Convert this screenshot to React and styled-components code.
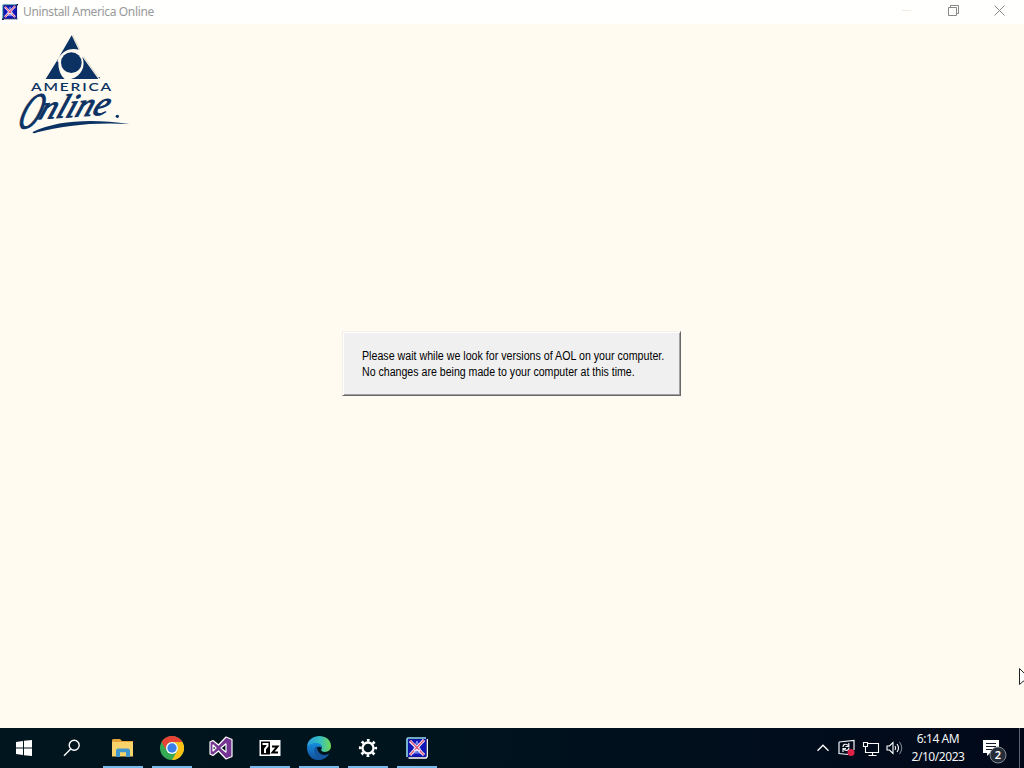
import React from 'react'
import styled, { createGlobalStyle } from 'styled-components'

const GlobalStyle = createGlobalStyle`
  body {
    margin: 0;
    overflow: hidden;
    background: #fffbf0;
  }
  svg {
    display: block;
  }
`

const Desktop = styled.div`
  position: relative;
  display: flex;
  flex-direction: column;
  width: 1024px;
  height: 768px;
  overflow: hidden;
  font-family: "Noto Sans", "Open Sans", sans-serif;
`

const TitleBar = styled.header`
  display: flex;
  align-items: center;
  height: 24px;
  padding: 0 2px 0 2px;
  box-sizing: border-box;
  background: #fffffe;
`

const Title = styled.span`
  flex: 1;
  margin-left: 5px;
  font-size: 12px;
  line-height: 24px;
  letter-spacing: -0.35px;
  color: #999;
`

const WindowButton = styled.span`
  display: flex;
  align-items: center;
  justify-content: center;
  width: 46px;
  height: 20px;
  margin-bottom: 4px;
`

const Content = styled.main`
  display: grid;
  grid-template-rows: 307px auto 1fr;
  height: 704px;
  background: #fffbf0;
`

const LogoArea = styled.div`
  padding: 4px 0 0 10px;
`

const Dialog = styled.div`
  width: 339px;
  height: 65px;
  box-sizing: border-box;
  margin-left: 342px;
  padding: 16px 0 0 19px;
  border: 1px solid;
  border-color: #f1efe6 #696969 #696969 #f1efe6;
  box-shadow: inset 1px 1px #fff, inset -1px -1px #a0a0a0;
  background: #f0f0f0;
`

const Line = styled.p`
  margin: 0;
  font-family: "Liberation Sans", Arial, sans-serif;
  font-size: 12px;
  line-height: 16px;
  white-space: nowrap;
  color: #000;
  transform: scaleX(${props => props.$narrow});
  transform-origin: left;
`

const Taskbar = styled.footer`
  display: flex;
  height: 40px;
  background: linear-gradient(90deg, #00151d 0%, #00141e 45%, #010d1c 75%, #010919 100%);
`

const Task = styled.div`
  display: flex;
  align-items: center;
  justify-content: center;
  box-sizing: border-box;
  width: 40px;
  height: 40px;
  margin-right: 9px;
  padding-top: ${props => props.$open ? 2 : 0}px;
  padding-right: ${props => props.$nudge || 0}px;
  border-bottom: ${props => props.$open ? '2px solid #76b9ed' : 'none'};
`

const Tasks = styled.div`
  display: flex;
  flex: 1;
  padding-left: 5px;
`

const Tray = styled.div`
  display: flex;
  align-items: center;
  gap: 6px;
  svg:first-child {
    margin-right: 3px;
  }
`

const Clock = styled.div`
  width: 68px;
  padding-top: 2px;
  font-size: 12px;
  line-height: 18px;
  letter-spacing: -0.45px;
  text-align: center;
  white-space: nowrap;
  color: #f3f5f7;
`

const Notifications = styled.div`
  width: 46px;
  margin-left: 1px;
  border-right: 1px solid #5b6470;
`

const Pointer = styled.div`
  position: absolute;
  left: 1019px;
  top: 668px;
`

const UninstallIcon = ({ size }) => (
  <svg width={size} height={size} viewBox="0 0 22 22">
    <path d="M2 0H22V20L20 22H0V2Z" fill="#0a1238" />
    <path d="M1 20V2L2 1H20" fill="none" stroke="#8edcf0" strokeWidth="1.600" />
    <path d="M2.500 21H20L21.300 19.500V2" fill="none" stroke="#fff" strokeWidth="1.300" />
    <rect x="2.200" y="2.200" width="18" height="17.600" fill="#1015b8" />
    <path d="M11 4L16 16H6Z" fill="#4b56dd" stroke="#8f9aee" />
    <path d="M4 4L18 18M18 3L4 18" stroke="#fff" strokeWidth="3" />
    <path d="M4 3.500L18 18M18 3L4 18" stroke="#e0557c" strokeWidth="1.400" />
    <path d="M8 13.500H14" stroke="#dfe6ff" strokeWidth="1.500" />
  </svg>
)

const AolLogo = () => (
  <svg width="130" height="112" viewBox="0 0 390 336">
    <path d="M188 22L209 64M221 86L267 150" stroke="#dedac8" strokeWidth="3" />
    <g fill="#0b3263">
      <path d="M185 22L206 65C181 59 161 67 145 91Z" />
      <path d="M146 90C143 115 147 137 164 153H107Z" />
      <path d="M217 86L265 153H183C214 144 228 116 217 86Z" />
      <circle cx="184" cy="104" r="31" />
      <circle cx="268" cy="149" r="2" />
    </g>
    <path d="M144 101C154 74 181 61 215 71" fill="none" stroke="#fffbf0" strokeWidth="5" />
    <text x="63" y="188" textLength="246" lengthAdjust="spacingAndGlyphs" fontFamily="Lato, sans-serif" fontSize="34" fontWeight="600" letterSpacing="4" fill="#0b3263">AMERICA</text>
    <g fontFamily="Liberation Serif, serif" fontStyle="italic" fill="#0b3263" stroke="#0b3263" strokeWidth="3">
      <text transform="translate(16 303) rotate(-4) skewX(-24)" fontSize="150" textLength="66" lengthAdjust="spacingAndGlyphs">O</text>
      <text transform="translate(82 274) rotate(-4) skewX(-24)" fontSize="98" textLength="208" lengthAdjust="spacingAndGlyphs">nline</text>
    </g>
    <circle cx="322" cy="265" r="5" fill="#0b3263" />
    <path d="M68 312C142 277 243 272 358 288C250 282 156 293 82 313C73 317 67 316 68 312Z" fill="#0b3263" />
  </svg>
)

const App = () => (
  <Desktop>
    <GlobalStyle />
    <TitleBar>
      <UninstallIcon size={16} />
      <Title>Uninstall America Online</Title>
      <WindowButton>
        <svg width="10" height="10"><path d="M0 5.500H9" stroke="#f3ece4" /></svg>
      </WindowButton>
      <WindowButton>
        <svg width="11" height="11" fill="none" stroke="#888">
          <path d="M0.500 2.500H8.500V10.500H0.500ZM2.500 2.500V0.500H10.500V8.500H8.500" />
        </svg>
      </WindowButton>
      <WindowButton>
        <svg width="11" height="11"><path d="M0.500 0.500L10.500 10.500M10.500 0.500L0.500 10.500" stroke="#888" /></svg>
      </WindowButton>
    </TitleBar>

    <Content>
      <LogoArea><AolLogo /></LogoArea>
      <Dialog>
        <Line $narrow={0.888}>Please wait while we look for versions of AOL on your computer.</Line>
        <Line $narrow={0.883}>No changes are being made to your computer at this time.</Line>
      </Dialog>
    </Content>

    <Taskbar>
      <Tasks>
        <Task $nudge={2}>
          <svg width="18" height="18" viewBox="0 0 18 18" fill="#fff">
            <path d="M1 3L8 2V8.500H1ZM9 1.800L17 1V8.500H9ZM1 9.500H8V16L1 15ZM9 9.500H17V17L9 16.200Z" />
          </svg>
        </Task>
        <Task $nudge={4}>
          <svg width="18" height="18" viewBox="0 0 18 18" fill="none" stroke="#fff" strokeWidth="1.400">
            <circle cx="11.200" cy="6.300" r="5" />
            <path d="M7.700 10L1 16.700" />
          </svg>
        </Task>
        <Task $open>
          <svg width="22" height="20" viewBox="0 0 22 20">
            <path d="M0 2L1 1H8L10 3H21V18H0Z" fill="#e5a43a" />
            <path d="M0 4H21V18.500H0Z" fill="#f8d36b" />
            <path d="M4 19V12L5.500 10.500H16.500L18 12V19H14V14.500H8V19Z" fill="#3e98cf" />
            <path d="M8 14.500H14V18H8Z" fill="#f5d66d" />
          </svg>
        </Task>
        <Task $open>
          <svg width="24" height="24" viewBox="0 0 24 24">
            <circle cx="12" cy="12" r="12" fill="#35a953" />
            <path d="M1.600 6A12 12 0 0 1 22.400 6H12A6 6 0 0 0 6.800 15Z" fill="#e94335" />
            <path d="M22.400 6A12 12 0 0 1 12 24L17.200 15A6 6 0 0 0 12 6Z" fill="#fbc116" />
            <circle cx="12" cy="12" r="6" fill="#fff" />
            <circle cx="12" cy="12" r="4.700" fill="#3a7ee8" />
          </svg>
        </Task>
        <Task>
          <svg width="24" height="24" viewBox="0 0 24 24">
            <path fillRule="evenodd" d="M1 6L4 4.500L9.500 9L17 1L23 3.500V20.500L17 23L9.500 15L4 19.500L1 18ZM4 9V15L7 12ZM17 7.800L12 12L17 16.200Z" fill="#733591" stroke="#fff" strokeWidth="1.200" strokeLinejoin="round" />
          </svg>
        </Task>
        <Task $open>
          <svg width="22" height="18" viewBox="0 0 22 18">
            <path d="M0.500 1H21.500V17H0.500Z" fill="#fff" />
            <path d="M2 2.500H11V15.500H2Z" fill="#000" />
            <path d="M3.500 5H8.500V7L6 10V14" fill="none" stroke="#fff" strokeWidth="2" />
            <path d="M13 7.500H18.500L13.500 13.500H19" fill="none" stroke="#000" strokeWidth="2" />
          </svg>
        </Task>
        <Task $open>
          <svg width="24" height="24" viewBox="0 0 24 24">
            <defs>
              <linearGradient id="edgeTop" x1="0" x2="1"><stop stopColor="#299ee0" /><stop offset=".55" stopColor="#36bfc0" /><stop offset="1" stopColor="#72da55" /></linearGradient>
              <linearGradient id="edgeLow" x2="0" y2="1"><stop stopColor="#168ddd" /><stop offset="1" stopColor="#124f9c" /></linearGradient>
            </defs>
            <path d="M0 11C1-4 24-3 24 10C24 17 15 17 14 14C18 9 9 4 0 11Z" fill="url(#edgeTop)" />
            <path d="M0 11C5 5 15 6 15 12C10 8 6 15 10 19C14 22 19 20 22 18C16 28 0 26 0 11Z" fill="url(#edgeLow)" />
            <path d="M10 10C5 12 7 22 14 23C18 23 21 20 22 18C15 21 10 17 10 10Z" fill="#15579f" />
          </svg>
        </Task>
        <Task $open>
          <svg width="20" height="20" viewBox="0 0 20 20" fill="none" stroke="#fff">
            <circle cx="10" cy="10" r="5.500" strokeWidth="2.300" />
            <circle cx="10" cy="10" r="7.700" strokeWidth="2.800" strokeDasharray="2.650 3.398" strokeDashoffset="1.325" />
          </svg>
        </Task>
        <Task $open><UninstallIcon size={22} /></Task>
      </Tasks>

      <Tray>
        <svg width="12" height="8"><path d="M0.500 6.700L6 1.200L11.500 6.700" fill="none" stroke="#fff" strokeWidth="1.300" /></svg>
        <svg width="18" height="18" viewBox="0 0 18 18" fill="none" stroke="#f2f4f7" strokeWidth="1.200">
          <path d="M1 3L16 1.500V11M1 3V14.500L10 15.500" />
          <path d="M5 8C5 4.500 9 4.500 10.500 7M10.800 4V7.500H7.500M11 8.500C11 12 7 12 5.500 10M5 13V9.700H8" />
          <circle cx="13" cy="13.500" r="3.500" fill="#dd2448" stroke="none" />
        </svg>
        <svg width="18" height="17" viewBox="0 0 18 17" fill="none" stroke="#fff" strokeWidth="1.100">
          <path d="M5.500 3.500H16.500V12.500H3.500V7M10.500 12.500V15.500M6.500 15.500H14.500M1.500 2.500H5.500V6.500H1.500ZM3.500 6.500V12.500" />
        </svg>
        <svg width="18" height="16" viewBox="0 0 18 16" fill="none" stroke="#fff" strokeWidth="1.100">
          <path d="M1 6H3.500L7 2.500V13.500L3.500 10H1Z" />
          <path d="M9 6Q10.400 8 9 10M11 4Q14 8 11 12" />
          <path d="M13.500 2Q18 8 13.500 14" stroke="#76808e" />
        </svg>
      </Tray>
      <Clock>6:14 AM<br />2/10/2023</Clock>
      <Notifications>
        <svg width="46" height="40" viewBox="0 0 46 40">
          <path d="M10 12H26V25H17L14 28V25H10Z" fill="#fff" />
          <path d="M13 15.500H23M13 18.500H23M13 21.500H19" stroke="#111827" />
          <circle cx="25" cy="27" r="8" fill="#252d38" stroke="#858b94" />
          <text x="25" y="31" textAnchor="middle" fontSize="11" fontWeight="600" fill="#fff">2</text>
        </svg>
      </Notifications>
      <svg width="4" height="40" />
    </Taskbar>

    <Pointer>
      <svg width="5" height="18"><path d="M0.500 0.500V16.500L4.500 13L6 15V6Z" fill="#fff" stroke="#222" /></svg>
    </Pointer>
  </Desktop>
)

export default App
